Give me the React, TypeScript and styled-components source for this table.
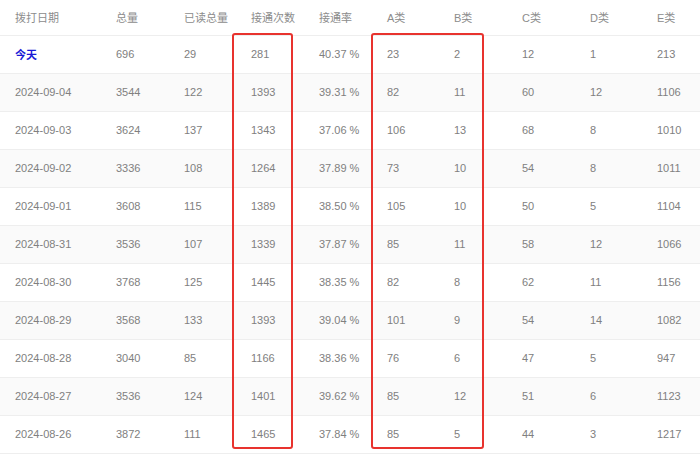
import React from "react";
import styled, { createGlobalStyle } from "styled-components";

const GlobalStyle = createGlobalStyle`
  body {
    margin: 0;
    background: #fff;
    font-family: "Liberation Sans", "Noto Sans CJK SC", sans-serif;
  }
`;

export const Wrapper = styled.div`
  position: relative;
  width: 700px;
  height: 455px;
  overflow: hidden;
  background: #fff;
`;

export const Table = styled.table`
  width: 710px;
  border-collapse: collapse;
  table-layout: fixed;
  font-size: 11px;
  color: #808080;
`;

export const HeadCell = styled.th<{ $w: number }>`
  width: ${(p) => p.$w}px;
  height: 35px;
  padding: 0 0 0 15px;
  box-sizing: border-box;
  text-align: left;
  font-weight: 400;
  color: #8c8c8c;
  border-bottom: 1px solid #eeeeee;
`;

export const Row = styled.tr<{ $striped: boolean }>`
  height: 38px;
  background: ${(p) => (p.$striped ? "#fafafa" : "#fff")};
`;

export const Cell = styled.td`
  padding: 0 0 0 15px;
  box-sizing: border-box;
  border-bottom: 1px solid #eeeeee;
  white-space: nowrap;
`;

export const Today = styled.span`
  color: #1a1ad6;
  font-weight: 700;
`;

export const Highlight = styled.div<{ $left: number; $width: number }>`
  position: absolute;
  top: 33px;
  left: ${(p) => p.$left}px;
  width: ${(p) => p.$width}px;
  height: 416px;
  box-sizing: border-box;
  border: 2px solid #e8332e;
  border-radius: 3px;
  pointer-events: none;
`;

const columns = [
  { title: "拨打日期", w: 101 },
  { title: "总量", w: 68 },
  { title: "已读总量", w: 67 },
  { title: "接通次数", w: 68 },
  { title: "接通率", w: 68 },
  { title: "A类", w: 67 },
  { title: "B类", w: 68 },
  { title: "C类", w: 68 },
  { title: "D类", w: 67 },
  { title: "E类", w: 68 },
];

const rows = [
  ["今天", "696", "29", "281", "40.37 %", "23", "2", "12", "1", "213"],
  ["2024-09-04", "3544", "122", "1393", "39.31 %", "82", "11", "60", "12", "1106"],
  ["2024-09-03", "3624", "137", "1343", "37.06 %", "106", "13", "68", "8", "1010"],
  ["2024-09-02", "3336", "108", "1264", "37.89 %", "73", "10", "54", "8", "1011"],
  ["2024-09-01", "3608", "115", "1389", "38.50 %", "105", "10", "50", "5", "1104"],
  ["2024-08-31", "3536", "107", "1339", "37.87 %", "85", "11", "58", "12", "1066"],
  ["2024-08-30", "3768", "125", "1445", "38.35 %", "82", "8", "62", "11", "1156"],
  ["2024-08-29", "3568", "133", "1393", "39.04 %", "101", "9", "54", "14", "1082"],
  ["2024-08-28", "3040", "85", "1166", "38.36 %", "76", "6", "47", "5", "947"],
  ["2024-08-27", "3536", "124", "1401", "39.62 %", "85", "12", "51", "6", "1123"],
  ["2024-08-26", "3872", "111", "1465", "37.84 %", "85", "5", "44", "3", "1217"],
];

export default function App() {
  return (
    <Wrapper>
      <GlobalStyle />
      <Table>
        <thead>
          <tr>
            {columns.map((c) => (
              <HeadCell key={c.title} $w={c.w}>
                {c.title}
              </HeadCell>
            ))}
          </tr>
        </thead>
        <tbody>
          {rows.map((r, i) => (
            <Row key={r[0]} $striped={i % 2 === 1}>
              {r.map((v, j) => (
                <Cell key={j}>{j === 0 && v === "今天" ? <Today>{v}</Today> : v}</Cell>
              ))}
            </Row>
          ))}
        </tbody>
      </Table>
      <Highlight $left={232} $width={61} />
      <Highlight $left={371} $width={113} />
    </Wrapper>
  );
}
